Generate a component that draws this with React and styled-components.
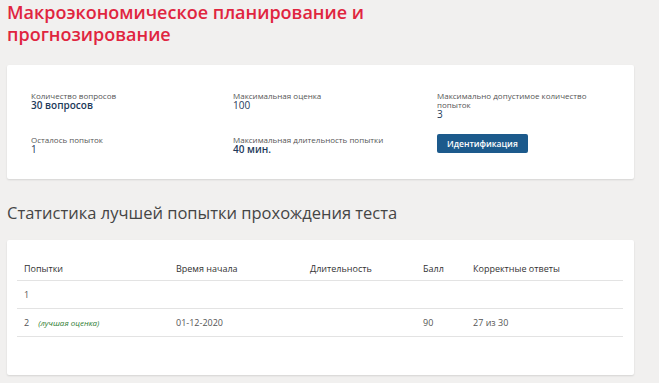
import React from "react";
import styled, { createGlobalStyle } from "styled-components";

const GlobalStyle = createGlobalStyle`
body {
  margin: 0;
  background: #f1f0ef;
  font-family: "Open Sans", "Liberation Sans", sans-serif;
}
`;

const Page = styled.div`
padding: 0 25px 10px 7px;
`;

const Title = styled.h1`
margin: 0;
padding-top: 1px;
font-size: 18px;
line-height: 22px;
font-weight: 600;
color: #e0253f;
`;

const Card = styled.div`
background: #fff;
border-radius: 2px;
box-shadow: 0 1px 2px rgba(0, 0, 0, 0.12);
`;

const InfoCard = styled(Card)`
margin-top: 20px;
padding: 26px 24px 24px 24px;
display: grid;
grid-template-columns: 202px 204px 150px;
row-gap: 15px;
`;

const InfoItem = styled.div`
display: flex;
flex-direction: column;
align-items: flex-start;
`;

const Label = styled.span`
font-size: 8px;
line-height: 9px;
color: #555;
`;

const Value = styled.span`
font-size: 10px;
line-height: 11px;
font-weight: ${(p) => (p.bold ? 600 : 400)};
color: #1d3a5a;
`;

const Button = styled.button`
margin-top: -1px;
height: 19px;
padding: 0 10px;
border: none;
border-radius: 2px;
background: #1c5a8c;
color: #fff;
font-family: "Open Sans", "Liberation Sans", sans-serif;
font-size: 8.5px;
font-weight: 600;
cursor: pointer;
`;

const SectionTitle = styled.h2`
margin: 22px 0 0 0;
font-size: 16.5px;
line-height: 24px;
font-weight: 400;
color: #454545;
`;

const TableCard = styled(Card)`
margin-top: 15px;
padding: 12px 11px 38px 10px;
`;

const Table = styled.table`
width: 100%;
border-collapse: collapse;
table-layout: fixed;
font-size: 9px;
color: #555;
`;

const Th = styled.th`
text-align: left;
font-weight: 400;
color: #333;
height: 24px;
padding: 4px 7px 0 7px;
border-bottom: 1px solid #e3e3e3;
width: ${(p) => (p.w ? `${p.w - 14}px` : "auto")};
`;

const Td = styled.td`
height: 27px;
padding: 0 7px;
border-bottom: 1px solid #e3e3e3;
`;

const Best = styled.i`
margin-left: 9px;
font-size: 8px;
color: #2e7d32;
`;

const info = [
  { label: "Количество вопросов", value: "30 вопросов", bold: true },
  { label: "Максимальная оценка", value: "100" },
  { label: "Максимально допустимое количество попыток", value: "3" },
  { label: "Осталось попыток", value: "1" },
  { label: "Максимальная длительность попытки", value: "40 мин.", bold: true },
];

const columns = [
  { title: "Попытки", w: 152 },
  { title: "Время начала", w: 134 },
  { title: "Длительность", w: 113 },
  { title: "Балл", w: 50 },
  { title: "Корректные ответы" },
];

const rows = [
  { n: "1", best: false, start: "", dur: "", score: "", correct: "" },
  { n: "2", best: true, start: "01-12-2020", dur: "", score: "90", correct: "27 из 30" },
];

const App = () => {
  return (
    <Page>
      <GlobalStyle />
      <Title>
        Макроэкономическое планирование и
        <br />
        прогнозирование
      </Title>
      <InfoCard>
        {info.map((item) => (
          <InfoItem key={item.label}>
            <Label>{item.label}</Label>
            <Value bold={item.bold}>{item.value}</Value>
          </InfoItem>
        ))}
        <InfoItem>
          <Button>Идентификация</Button>
        </InfoItem>
      </InfoCard>
      <SectionTitle>Статистика лучшей попытки прохождения теста</SectionTitle>
      <TableCard>
        <Table>
          <thead>
            <tr>
              {columns.map((c) => (
                <Th key={c.title} w={c.w}>
                  {c.title}
                </Th>
              ))}
            </tr>
          </thead>
          <tbody>
            {rows.map((r) => (
              <tr key={r.n}>
                <Td>
                  {r.n}
                  {r.best && <Best>(лучшая оценка)</Best>}
                </Td>
                <Td>{r.start}</Td>
                <Td>{r.dur}</Td>
                <Td>{r.score}</Td>
                <Td>{r.correct}</Td>
              </tr>
            ))}
          </tbody>
        </Table>
      </TableCard>
    </Page>
  );
};

export default App;
